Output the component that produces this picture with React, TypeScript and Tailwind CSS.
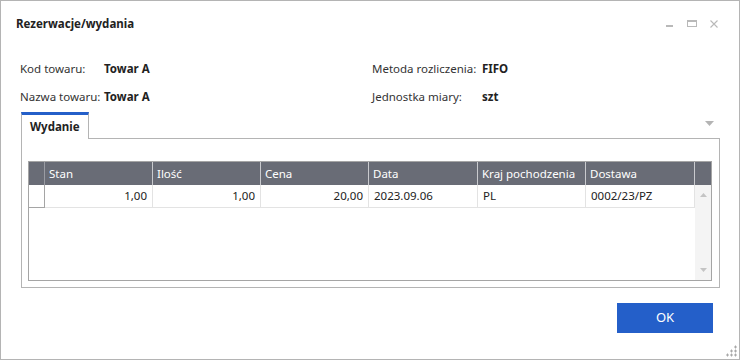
const COLS = [
  { title: 'Stan', value: '1,00', right: true, w: 'w-[108px]' },
  { title: 'Ilość', value: '1,00', right: true, w: 'w-[108px]' },
  { title: 'Cena', value: '20,00', right: true, w: 'w-[108px]' },
  { title: 'Data', value: '2023.09.06', right: false, w: 'w-[109px]' },
  { title: 'Kraj pochodzenia', value: 'PL', right: false, w: 'w-[108px]' },
  { title: 'Dostawa', value: '0002/23/PZ', right: false, w: 'w-[109px]' },
]

function WindowControls() {
  return (
    <div className="flex items-center gap-[13px] pr-[21px]">
      <svg width="8" height="10" viewBox="0 0 8 10"><rect x="0" y="6" width="7" height="2" fill="#b9b9b9" /></svg>
      <svg width="10" height="8" viewBox="0 0 10 8">
        <rect x="0.5" y="0.5" width="9" height="6" fill="none" stroke="#b9b9b9" />
        <rect x="0" y="0" width="10" height="2" fill="#b9b9b9" />
      </svg>
      <svg width="8" height="8" viewBox="0 0 8 8">
        <path d="M0.5 0.5 L7.5 7.5 M7.5 0.5 L0.5 7.5" stroke="#b9b9b9" strokeWidth="1.1" />
      </svg>
    </div>
  )
}

function InfoRow({ label, value, labelW }: { label: string; value: string; labelW: string }) {
  return (
    <div className="flex items-center h-[28px]">
      <span className={`${labelW} text-[#333]`}>{label}</span>
      <span className="font-bold text-[#222]">{value}</span>
    </div>
  )
}

export default function App() {
  return (
    <div
      className="relative w-[740px] h-[360px] bg-white border border-[#b4b4b4] text-[11.5px] flex flex-col"
      style={{ fontFamily: '"Noto Sans", "Open Sans", sans-serif' }}
    >
      <div className="h-[46px] flex items-center justify-between pl-[15px]">
        <span className="font-bold text-[#222]">Rezerwacje/wydania</span>
        <WindowControls />
      </div>

      <div className="mt-[8px] grid grid-cols-[352px_1fr] pl-[19px]">
        <InfoRow label="Kod towaru:" value="Towar A" labelW="w-[84px]" />
        <InfoRow label="Metoda rozliczenia:" value="FIFO" labelW="w-[110px]" />
        <InfoRow label="Nazwa towaru:" value="Towar A" labelW="w-[84px]" />
        <InfoRow label="Jednostka miary:" value="szt" labelW="w-[110px]" />
      </div>

      <div className="ml-[20px] mt-[1px] w-[699px] flex flex-col">
        <div className="flex h-[27px]">
          <div className="w-[68px] border-t-[3px] border-t-[#245fc9] border-x border-x-[#b4b4b4] flex items-center pl-[8px] pb-[1px] font-bold text-[#222]">
            Wydanie
          </div>
          <div className="flex-1 border-b border-[#b4b4b4] flex justify-end pr-[6px] pt-[9px]">
            <svg width="9" height="5" viewBox="0 0 9 5"><path d="M0 0 H9 L4.5 5 Z" fill="#b4b4b4" /></svg>
          </div>
        </div>

        <div className="h-[149px] border-x border-b border-[#b4b4b4] pt-[22px] pl-[6px]">
          <div className="w-[684px] h-[120px] border border-[#a5a5a5] flex flex-col">
            <div className="flex h-[23px] bg-[#696c76] text-white">
              <div className="w-[16px] border-r border-[#9a9ca3]" />
              {COLS.map(c => (
                <div key={c.title} className={`${c.w} border-r border-[#c9cace] flex items-center px-[4px]`}>
                  {c.title}
                </div>
              ))}
              <div className="flex-1" />
            </div>
            <div className="flex flex-1">
              <div className="flex flex-col flex-1">
                <div className="flex h-[23px] text-[#222]">
                  <div className="w-[16px] border-r border-b border-[#a5a5a5]" />
                  {COLS.map(c => (
                    <div
                      key={c.title}
                      className={`${c.w} border-r border-b border-[#e3e3e3] flex items-center px-[5px] ${c.right ? 'justify-end' : ''}`}
                    >
                      {c.value}
                    </div>
                  ))}
                </div>
              </div>
              <div className="w-[17px] bg-[#f4f4f4] flex flex-col items-center justify-between py-[8px]">
                <svg width="7" height="4" viewBox="0 0 7 4"><path d="M0 4 H7 L3.5 0 Z" fill="#c4c4c4" /></svg>
                <svg width="7" height="4" viewBox="0 0 7 4"><path d="M0 0 H7 L3.5 4 Z" fill="#c4c4c4" /></svg>
              </div>
            </div>
          </div>
        </div>
      </div>

      <div className="flex justify-end pr-[26px] mt-[15px]">
        <button className="w-[96px] h-[30px] bg-[#245fc9] text-white text-[13px]">OK</button>
      </div>

      <svg className="absolute right-[2px] bottom-[2px]" width="12" height="12" viewBox="0 0 12 12">
        {[[9, 1], [5, 5], [9, 5], [1, 9], [5, 9], [9, 9]].map(([x, y]) => (
          <path key={`${x}-${y}`} d={`M${x} ${y + 1} H${x + 3} M${x + 1.5} ${y - 0.5} V${y + 2.5}`} stroke="#a8a8a8" strokeWidth="1" />
        ))}
      </svg>
    </div>
  )
}
